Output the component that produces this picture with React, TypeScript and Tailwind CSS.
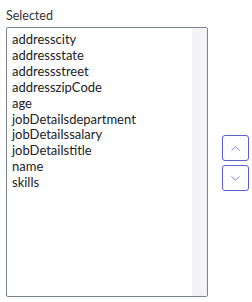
import { ChevronUp, ChevronDown } from 'lucide-react'

const items = [
  'addresscity',
  'addressstate',
  'addressstreet',
  'addresszipCode',
  'age',
  'jobDetailsdepartment',
  'jobDetailssalary',
  'jobDetailstitle',
  'name',
  'skills',
]

export default function App() {
  return (
    <div className="w-[252px] h-[302px] bg-white pl-[6px] pt-[7px] text-[#222]" style={{ fontFamily: 'Lato, "Liberation Sans", sans-serif' }}>
      <div className="text-[12.5px] leading-[18px] text-[#333] mb-[2px]">Selected</div>
      <div className="flex items-center gap-[14px]">
        <div className="flex w-[202px] h-[270px] border border-[#7d838d] rounded-[2px] overflow-hidden">
          <ul className="flex-1 pt-[4px] pl-[5px] text-[13px] leading-[15.9px]">
            {items.map((it) => (
              <li key={it}>{it}</li>
            ))}
          </ul>
          <div className="w-[15px] bg-[#f4f4f6]" />
        </div>
        <div className="flex flex-col gap-[4px] mt-[2px]">
          <button className="w-[27px] h-[26px] flex items-center justify-center border border-[#5b5fd1] rounded-[3px] text-[#5b5fd1]">
            <ChevronUp size={15} strokeWidth={1.25} />
          </button>
          <button className="w-[27px] h-[26px] flex items-center justify-center border border-[#5b5fd1] rounded-[3px] text-[#5b5fd1]">
            <ChevronDown size={15} strokeWidth={1.25} />
          </button>
        </div>
      </div>
    </div>
  )
}
